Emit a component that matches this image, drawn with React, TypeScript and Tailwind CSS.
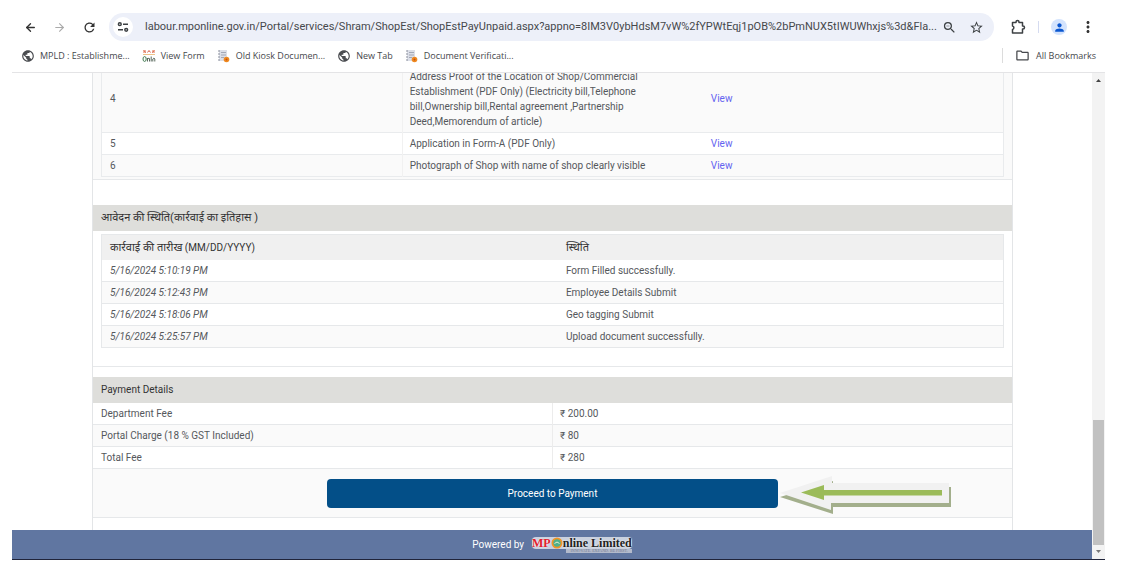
import type { ReactNode } from "react";
import { LuArrowLeft, LuArrowRight } from "react-icons/lu";
import {
  MdMoreVert,
  MdOutlineFolder,
  MdPerson,
  MdPublic,
  MdRefresh,
  MdStarOutline,
  MdZoomOut,
} from "react-icons/md";

const documents = [
  {
    no: 4,
    name: "Address Proof of the Location of Shop/Commercial Establishment (PDF Only) (Electricity bill,Telephone bill,Ownership bill,Rental agreement ,Partnership Deed,Memorendum of article)",
  },
  { no: 5, name: "Application in Form-A (PDF Only)" },
  { no: 6, name: "Photograph of Shop with name of shop clearly visible" },
];

const history = [
  { date: "5/16/2024 5:10:19 PM", status: "Form Filled successfully." },
  { date: "5/16/2024 5:12:43 PM", status: "Employee Details Submit" },
  { date: "5/16/2024 5:18:06 PM", status: "Geo tagging Submit" },
  { date: "5/16/2024 5:25:57 PM", status: "Upload document successfully." },
];

const fees = [
  { label: "Department Fee", amount: "₹ 200.00" },
  { label: "Portal Charge (18 % GST Included)", amount: "₹ 80" },
  { label: "Total Fee", amount: "₹ 280" },
];

function GlobeIcon() {
  return <MdPublic size={14} className="text-[#4a4c50]" />;
}

function OnlineIcon() {
  return (
    <svg width="14" height="14" viewBox="0 0 14 14" aria-hidden="true">
      <path d="M1 1h3v3H1zM10 1h3v3h-3z" fill="#f0b7a4" />
      <path d="M2 1.500l1.500 2M5.500 3.500l1.500-2 1.500 2M10.500 3.500l1.500-2" fill="none" stroke="#d9604a" />
      <path d="M1 5.500h12" stroke="#efc48a" />
      <ellipse cx="2.600" cy="10" rx="1.600" ry="2.400" fill="none" stroke="#3f7a4f" />
      <path
        d="M5.500 12.500V9M5.500 10q2-2 2 0v2.500M9.200 7.500v5M10.800 12.500V10q1.200-2 2 0v2.500"
        fill="none"
        stroke="#5c6b60"
      />
    </svg>
  );
}

function DocumentIcon() {
  return (
    <svg width="14" height="14" viewBox="0 0 14 14" aria-hidden="true">
      <path d="M2 1h8v11H2z" fill="#dcdfe8" />
      <path d="M1 2h2M1 5h2M1 8h2M1 11h2" stroke="#8a8f9c" />
      <path d="M4 3.500h5M4 6h5M4 8.500h3" stroke="#a3a8b6" />
      <circle cx="9.500" cy="10.500" r="2.800" fill="#ee8a22" />
      <circle cx="9.500" cy="10.500" r="1" fill="#c8500f" />
    </svg>
  );
}

function SiteSettingsIcon() {
  return (
    <svg width="12" height="12" viewBox="0 0 12 12" fill="none" stroke="#3c4043" strokeWidth="1.500" aria-hidden="true">
      <circle cx="2.800" cy="3.200" r="1.400" />
      <path d="M6 3.200h5M1 8.800h5" />
      <circle cx="9.200" cy="8.800" r="1.400" />
    </svg>
  );
}

function ExtensionIcon() {
  return (
    <svg width="16" height="16" viewBox="0 0 16 16" fill="none" stroke="#3c4043" strokeWidth="1.500" aria-hidden="true">
      <path d="M2.500 3.500H6V3a1.500 1.500 0 0 1 3 0v.5h3.500V7h.5a1.500 1.500 0 0 1 0 3h-.5v4h-10v-3.500a1.800 1.800 0 0 0 0-3.500z" strokeLinejoin="round" />
    </svg>
  );
}

const bookmarks = [
  { label: "MPLD : Establishme...", icon: <GlobeIcon /> },
  { label: "View Form", icon: <OnlineIcon /> },
  { label: "Old Kiosk Documen...", icon: <DocumentIcon /> },
  { label: "New Tab", icon: <GlobeIcon /> },
  { label: "Document Verificati...", icon: <DocumentIcon /> },
];

function BrowserBar() {
  return (
    <header className="border-b border-[#e4e4e6] pt-[13px] font-['Open_Sans',sans-serif] text-[#46484c]">
      <div className="flex h-7 items-center pr-2">
        <button aria-label="Back" className="ml-3 text-[#333]">
          <LuArrowLeft size={13} strokeWidth={2.5} />
        </button>
        <button aria-label="Forward" className="ml-4 text-[#aaa]">
          <LuArrowRight size={13} strokeWidth={2} />
        </button>
        <button aria-label="Reload" className="ml-4 text-[#333]">
          <MdRefresh size={15} />
        </button>
        <div className="ml-3 flex h-7 min-w-0 flex-1 items-center rounded-full bg-[#edf0f9] pr-[10px] pl-1">
          <span className="mr-3 flex size-5 shrink-0 items-center justify-center rounded-full bg-white">
            <SiteSettingsIcon />
          </span>
          <input
            aria-label="Address"
            readOnly
            value="labour.mponline.gov.in/Portal/services/Shram/ShopEst/ShopEstPayUnpaid.aspx?appno=8IM3V0ybHdsM7vW%2fYPWtEqj1pOB%2bPmNUX5tIWUWhxjs%3d&Fla..."
            className="min-w-0 flex-1 bg-transparent font-['Roboto',sans-serif] text-[11px] outline-none"
          />
          <button aria-label="Zoom" className="ml-[2px] text-[#3c4043]">
            <MdZoomOut size={15} />
          </button>
          <button aria-label="Bookmark this page" className="ml-3 text-[#3c4043]">
            <MdStarOutline size={15} />
          </button>
        </div>
        <button aria-label="Extensions" className="ml-4">
          <ExtensionIcon />
        </button>
        <span className="ml-3 h-3 w-px bg-[#d5dbf0]" />
        <button
          aria-label="Profile"
          className="ml-3 flex size-4 items-center justify-center rounded-full bg-[#d3e3fd] text-[#0b57d0]"
        >
          <MdPerson size={13} />
        </button>
        <button aria-label="Menu" className="ml-3 text-[#333]">
          <MdMoreVert size={18} />
        </button>
      </div>
      <nav className="flex h-[31px] items-center gap-3 px-[9px] pb-[2px] text-[9px]">
        {bookmarks.map((b) => (
          <a key={b.label} href="#" className="flex items-center gap-[5px] whitespace-nowrap">
            {b.icon}
            {b.label}
          </a>
        ))}
        <a href="#" className="ml-auto flex items-center gap-[6px] border-l border-[#dcdcdc] pl-3 whitespace-nowrap">
          <MdOutlineFolder size={15} />
          All Bookmarks
        </a>
      </nav>
    </header>
  );
}

function SectionTitle({ children }: { children: ReactNode }) {
  return <h2 className="h-[26px] bg-[#dededb] px-2 leading-[26px] text-[#333]">{children}</h2>;
}

function DocumentsTable() {
  return (
    <div className="border-b border-[#e6e8ea] bg-[#fafafa] px-2 pb-[2px]">
      <table className="w-full table-fixed border-collapse border border-[#e9ebed]">
        <tbody>
          {documents.map((d) => (
            <tr key={d.no} className="border-b border-[#e9ebed] odd:bg-[#fafafa] even:bg-white">
              <td className="px-2 py-[3px]">{d.no}</td>
              <td className="border-l border-[#f1f1f1] px-[7px] py-[3px]">{d.name}</td>
              <td className="px-2 py-[3px]">
                <a href="#" className="text-[#6464f0]">
                  View
                </a>
              </td>
            </tr>
          ))}
        </tbody>
      </table>
    </div>
  );
}

function HistoryTable() {
  return (
    <div className="border-b border-[#e6e8ea] px-2 pt-[3px] pb-[18px]">
      <table className="w-full table-fixed border-collapse border border-[#e6e8ea]">
        <thead>
          <tr className="h-[26px] bg-[#f0f0f0] text-left text-[#333]">
            <th className="w-[50.6%] px-2 font-normal">
              <span className="text-[11px]">कार्रवाई की तारीख</span> (MM/DD/YYYY)
            </th>
            <th className="px-2 text-[11px] font-normal">स्थिति</th>
          </tr>
        </thead>
        <tbody>
          {history.map((h) => (
            <tr key={h.date} className="border-b border-[#e6e8ea] even:bg-[#fafafa]">
              <td className="px-2 py-[3px] italic">{h.date}</td>
              <td className="px-2 py-[3px]">{h.status}</td>
            </tr>
          ))}
        </tbody>
      </table>
    </div>
  );
}

function FeeTable() {
  return (
    <table className="w-full table-fixed border-collapse">
      <tbody>
        {fees.map((f) => (
          <tr key={f.label} className="border-b border-[#e6e8ea] even:bg-[#fafafa]">
            <td className="px-2 py-[3px]">{f.label}</td>
            <td className="border-l border-[#ececec] px-[7px] py-[3px]">{f.amount}</td>
          </tr>
        ))}
      </tbody>
    </table>
  );
}

function PointerArrow() {
  return (
    <svg
      className="absolute -top-1 left-full"
      width="176"
      height="41"
      viewBox="0 0 176 41"
      aria-hidden="true"
    >
      <path d="M2 22L55 6v6h118v20H55v7z" fill="#a3af8c" />
      <path d="M2 18L54 1v7h117v20H53v7z" fill="#f1f1f1" />
      <path d="M23 17.500L46 10v5h118v5.500H46V25z" fill="#9bbb59" />
    </svg>
  );
}

function Scrollbar() {
  return (
    <div className="flex w-[13px] shrink-0 flex-col items-center bg-[#f3f3f3]" aria-hidden="true">
      <svg width="7" height="14" viewBox="0 0 7 14">
        <path d="M1 9l2.500-3L6 9z" fill="#444" />
      </svg>
      <div className="flex-1" />
      <div className="h-[125px] w-[11px] bg-[#c1c1c1]" />
      <svg width="7" height="14" viewBox="0 0 7 14">
        <path d="M1 5l2.500 3L6 5z" fill="#777" />
      </svg>
    </div>
  );
}

function MpOnlineLogo() {
  return (
    <span className="flex flex-col items-end font-['Liberation_Serif',serif] leading-none">
      <span className="flex items-center rounded-sm bg-[#c9d0de] text-[12px] font-bold text-[#222] text-shadow-[0_0_2px_#fff]">
        <span className="text-[#e3202c]">MP</span>
        <svg width="12" height="12" viewBox="0 0 12 12" aria-hidden="true">
          <circle cx="6" cy="6" r="4.600" fill="#4fb08a" stroke="#f39324" strokeWidth="1.800" />
          <path d="M3.500 6.500q2.500-3 5 0" fill="none" stroke="#e8f3d0" />
        </svg>
        nline Limited
      </span>
      <span className="bg-[#b3bacb] px-1 text-[4px] text-[#6f7890]">INNOVATE. EXPAND. BE FIRST.</span>
    </span>
  );
}

export default function App() {
  return (
    <div className="flex h-[560px] flex-col bg-white pr-[18px] pl-3">
      <BrowserBar />
      <div className="flex min-h-0 flex-1 border-b border-[#20243a]">
        <div className="flex min-w-0 flex-1 flex-col justify-end overflow-hidden">
          <main className="mr-[79px] ml-20 border-x border-[#e3e5e7] pb-3 font-['Roboto','Noto_Sans',sans-serif] text-[10px] leading-[15px] text-[#55585c]">
            <DocumentsTable />
            <section className="pt-[25px]">
              <SectionTitle>
                <span className="text-[11px]">आवेदन की स्थिति(कार्रवाई का इतिहास )</span>
              </SectionTitle>
              <HistoryTable />
            </section>
            <section className="pt-[10px]">
              <SectionTitle>Payment Details</SectionTitle>
              <FeeTable />
              <div className="flex justify-center border-b border-[#e6e8ea] bg-[#fafafa] pt-[10px] pb-[9px]">
                <div className="relative w-[49%]">
                  <button className="h-[29px] w-full rounded-sm bg-[#034f88] text-white">
                    Proceed to Payment
                  </button>
                  <PointerArrow />
                </div>
              </div>
            </section>
          </main>
          <footer className="flex h-[29px] shrink-0 items-center justify-center gap-2 bg-[#6076a1] font-['Roboto',sans-serif] text-[10px] text-white">
            Powered by
            <MpOnlineLogo />
          </footer>
        </div>
        <Scrollbar />
      </div>
    </div>
  );
}
